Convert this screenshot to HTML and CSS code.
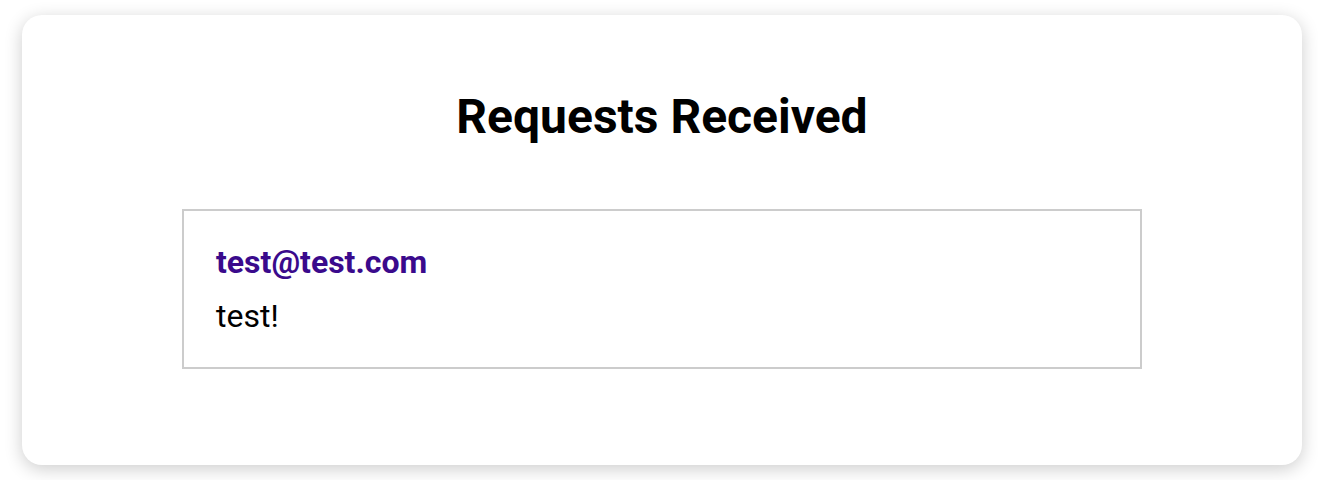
FILE: index.html
```html
<!DOCTYPE html>
<html>
<head>
<meta charset="utf-8">
<link rel="stylesheet" href="styles.css">
</head>
<body>
<div class="page">
  <section class="card">
    <h1 class="title">Requests Received</h1>
    <div class="request">
      <div class="request-email">test@test.com</div>
      <div class="request-message">test!</div>
    </div>
  </section>
</div>
</body>
</html>
```
FILE: styles.css
```css
html, body {
  margin: 0;
  padding: 0;
  background: #ffffff;
}
body {
  font-family: Roboto, "Noto Sans", "Liberation Sans", sans-serif;
  color: #000;
}
.page {
  padding: 15px 16px 15px 22px;
}
.card {
  box-sizing: border-box;
  width: 1280px;
  height: 450px;
  background: #fff;
  border-radius: 20px;
  box-shadow: 0 4px 18px rgba(0, 0, 0, 0.2);
  display: flex;
  flex-direction: column;
  align-items: center;
  padding-top: 74px;
}
.title {
  margin: 0;
  font-size: 48px;
  line-height: 56px;
  font-weight: 700;
}
.request {
  box-sizing: border-box;
  width: 960px;
  margin-top: 64px;
  border: 2px solid #cccccc;
  padding: 32px 32px 32px;
}
.request-email {
  font-size: 32px;
  line-height: 38px;
  font-weight: 700;
  color: #3a0a8c;
}
.request-message {
  margin-top: 16px;
  font-size: 32px;
  line-height: 38px;
}
```
